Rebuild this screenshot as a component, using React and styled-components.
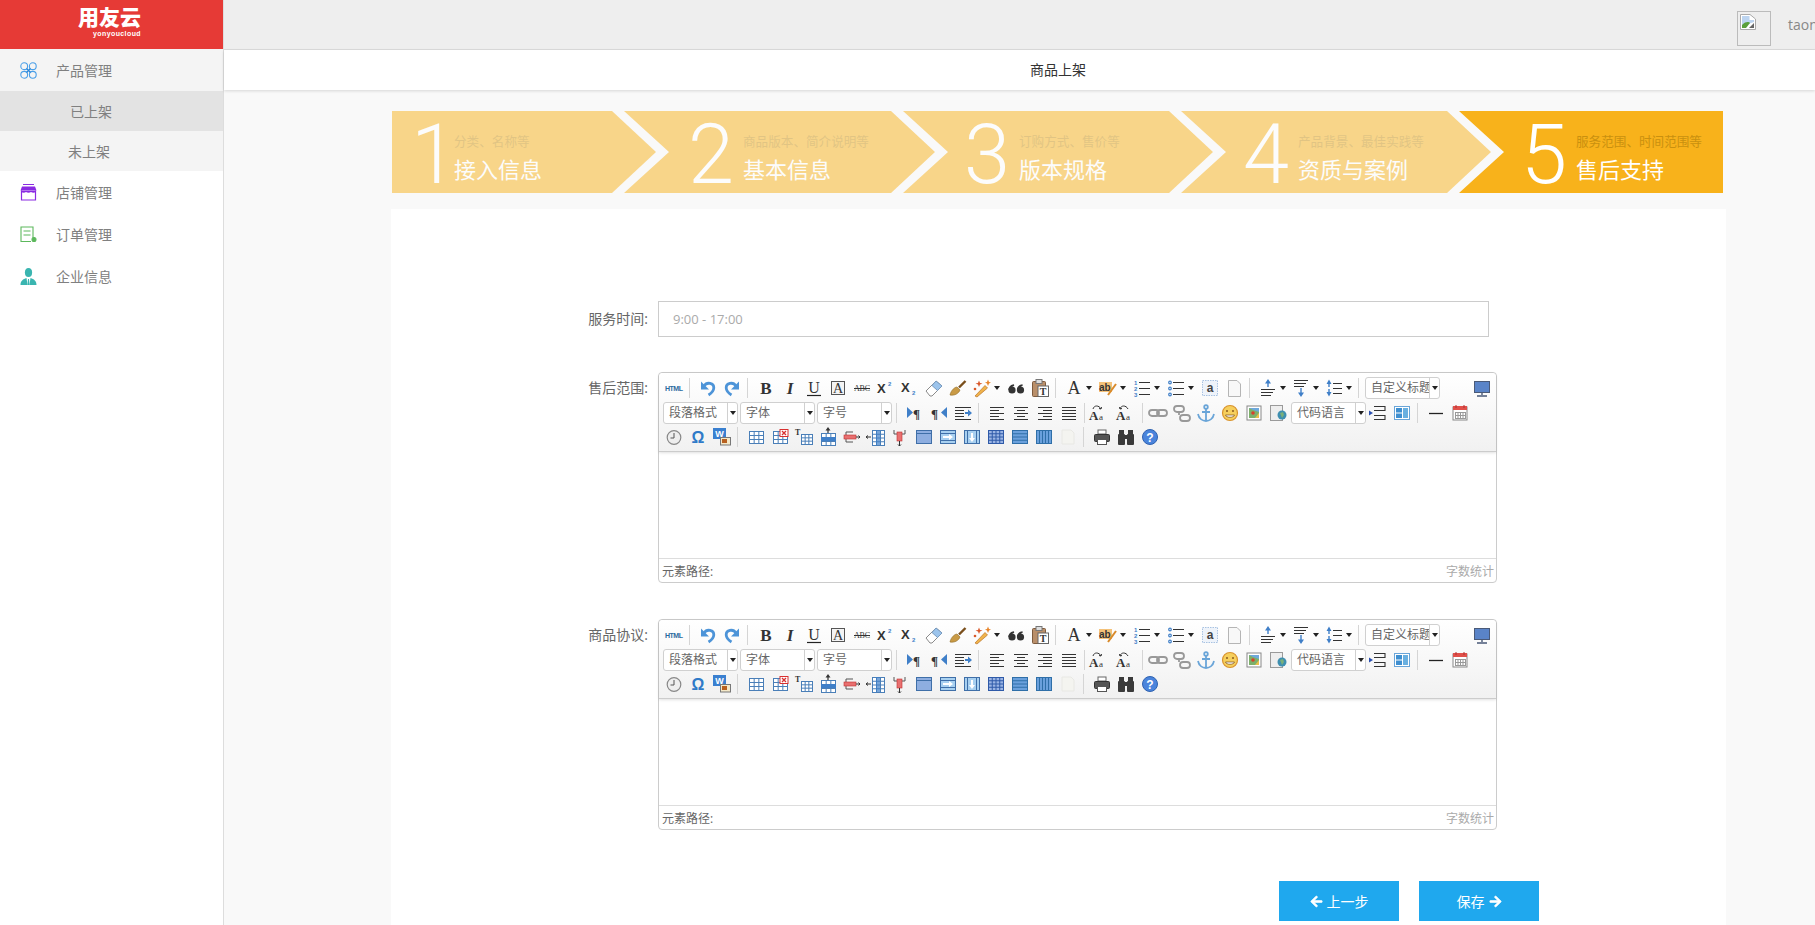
import React from "react";
import styled, { createGlobalStyle } from "styled-components";
import { FaArrowLeft, FaArrowRight } from "react-icons/fa";

const GlobalStyle = createGlobalStyle`
  html, body {
    margin: 0;
    height: 100%;
    overflow: hidden;
    background: #f9f9f9;
    font-family: "Open Sans", "Noto Sans CJK SC", sans-serif;
  }
`;

const Page = styled.div`
  display: grid;
  grid-template-columns: 224px 1fr;
  height: 925px;
  overflow: hidden;
`;

/* sidebar */
const Sidebar = styled.aside`
  background: #fff;
  border-right: 1px solid #ddd;
`;

const Logo = styled.div`
  height: 49px;
  background: #e63a36;
  color: #fff;
  display: flex;
  flex-direction: column;
  align-items: flex-end;
  padding-right: 82px;
  box-sizing: border-box;
`;

const LogoMark = styled.div`
  font: 800 21px/20px "Noto Sans CJK SC", sans-serif;
  margin-top: 6px;
`;

const LogoSub = styled.div`
  font: 700 7px/8px "Liberation Sans", sans-serif;
  letter-spacing: 0.4px;
  margin-top: 4px;
`;

const MenuItem = styled.div`
  display: flex;
  align-items: center;
  height: 42px;
  padding-left: 20px;
  gap: 19px;
  font-size: 14px;
  color: #808080;
  background: ${(p) => (p.$open ? "#f4f4f4" : "transparent")};
`;

const SubItem = styled.div`
  display: flex;
  align-items: center;
  height: 40px;
  padding-left: ${(p) => p.$indent}px;
  font-size: 14px;
  color: #808080;
  background: ${(p) => (p.$active ? "#e3e3e3" : "#f4f4f4")};
`;

/* top */
const Main = styled.main`
  min-width: 0;
  display: flex;
  flex-direction: column;
`;

const TopBar = styled.header`
  height: 49px;
  background: #eee;
  border-bottom: 1px solid #ddd;
  display: flex;
  align-items: center;
  padding-left: 1513px;
  gap: 17px;
  white-space: nowrap;
  font-size: 14px;
  color: #888;
  overflow: hidden;
`;

const Avatar = styled.div`
  flex: none;
  width: 34px;
  height: 35px;
  box-sizing: border-box;
  border: 1px solid #bbb;
  padding: 2px;
  margin-top: 8px;
`;

const TitleBar = styled.div`
  height: 40px;
  background: #fff;
  box-shadow: 0 1px 3px rgba(0, 0, 0, 0.14);
  padding-left: 167px;
`;

const Title = styled.div`
  width: 1334px;
  text-align: center;
  line-height: 40px;
  font-size: 14px;
  color: #333;
`;

const Content = styled.div`
  padding: 21px 0 0 167px;
`;

/* steps */
const Steps = styled.div`
  display: flex;
  height: 82px;
  padding-left: 1px;
`;

const Step = styled.div`
  flex: none;
  width: ${(p) => p.$w}px;
  margin-left: ${(p) => (p.$first ? 0 : -32)}px;
  padding-left: ${(p) => p.$pad}px;
  box-sizing: border-box;
  display: flex;
  align-items: center;
  background: #f8b21b;
  opacity: ${(p) => (p.$active ? 1 : 0.5)};
  clip-path: ${(p) =>
    p.$first
      ? "polygon(0 0, calc(100% - 44px) 0, 100% 50%, calc(100% - 44px) 100%, 0 100%)"
      : p.$active
        ? "polygon(0 0, 100% 0, 100% 100%, 0 100%, 45px 50%)"
        : "polygon(0 0, calc(100% - 44px) 0, 100% 50%, calc(100% - 44px) 100%, 0 100%, 45px 50%)"};
`;

const StepNum = styled.div`
  flex: none;
  width: 55px;
  height: 82px;
  box-sizing: border-box;
  padding: 3px 0 0 ${(p) => (p.$first ? 12 : 0)}px;
  font: 300 83px/82px Roboto, "Liberation Sans", sans-serif;
  color: #fff;
  text-align: ${(p) => (p.$first ? "center" : "left")};
`;

const StepText = styled.div`
  padding-top: 16px;
`;

const StepSub = styled.div`
  font-size: 12.6px;
  line-height: 18px;
  color: #c9900f;
  white-space: nowrap;
`;

const StepTitle = styled.div`
  font-size: 22px;
  line-height: 36px;
  color: #fff;
  white-space: nowrap;
`;

/* form */
const Panel = styled.section`
  width: 1335px;
  margin-top: 16px;
  background: #fff;
  padding: 92px 0 40px;
`;

const Row = styled.div`
  display: flex;
  align-items: flex-start;
  margin-bottom: ${(p) => p.$gap}px;
`;

const Label = styled.label`
  width: 267px;
  flex: none;
  box-sizing: border-box;
  padding-right: 10px;
  text-align: right;
  font-size: 14px;
  color: #666;
  line-height: ${(p) => p.$lh}px;
`;

const TextInput = styled.input`
  width: 831px;
  height: 36px;
  box-sizing: border-box;
  border: 1px solid #ccc;
  padding: 0 14px;
  font: 13px "Open Sans", sans-serif;
  outline: 0;
  &::placeholder {
    color: #aaa;
    opacity: 1;
  }
`;

/* editor */
const Editor = styled.div`
  width: 839px;
  height: 211px;
  box-sizing: border-box;
  border: 1px solid #ccc;
  border-radius: 4px;
  display: flex;
  flex-direction: column;
  background: #fff;
`;

const Toolbar = styled.div`
  height: 79px;
  flex: none;
  box-sizing: border-box;
  padding: 3px 2px 0 3px;
  background: linear-gradient(#fff, #f1f1f1);
  border-radius: 4px 4px 0 0;
  border-bottom: 1px solid #ccc;
  box-shadow: 0 1px 3px rgba(0, 0, 0, 0.12);
`;

const ToolRow = styled.div`
  display: flex;
  align-items: center;
  height: 24.5px;
`;

const ToolButton = styled.span`
  flex: none;
  width: 24px;
  height: 20px;
  display: flex;
  align-items: center;
  justify-content: center;
`;

const ToolIcon = styled.svg`
  overflow: visible;
`;

const ToolSep = styled.span`
  flex: none;
  width: 1px;
  height: 20px;
  margin: 0 ${(p) => p.$after}px 0 3px;
  background: #d5d5d5;
`;

const DropArrow = styled.span`
  flex: none;
  width: ${(p) => p.$w}px;
  &::before {
    content: "";
    display: block;
    width: 0;
    border: 3.5px solid transparent;
    border-top: 4px solid #222;
    border-bottom: 0;
  }
`;

const Select = styled.span`
  flex: none;
  width: 75px;
  height: 22px;
  margin: 0 ${(p) => p.$mr ?? 1}px 0 ${(p) => p.$ml ?? 1}px;
  box-sizing: border-box;
  border: 1px solid #d0d0d0;
  border-radius: 3px;
  background: #fff;
  display: flex;
  font-size: 12px;
  line-height: 20px;
  color: #666;
`;

const SelectText = styled.span`
  flex: 1;
  min-width: 0;
  overflow: hidden;
  white-space: nowrap;
  padding-left: 5px;
`;

const SelectArrow = styled.span`
  flex: none;
  width: 9px;
  border-left: 1px solid #d0d0d0;
  display: flex;
  align-items: center;
  justify-content: center;
  &::before {
    content: "";
    border: 3px solid transparent;
    border-top: 4px solid #222;
    border-bottom: 0;
  }
`;

const ToolSpacer = styled.span`
  flex: 1;
`;

const EditArea = styled.div`
  flex: 1;
`;

const StatusBar = styled.div`
  height: 24px;
  flex: none;
  box-sizing: border-box;
  border-top: 1px solid #ddd;
  display: flex;
  justify-content: space-between;
  align-items: center;
  padding: 0 2px 0 3px;
  font-size: 12px;
  color: #666;
`;

const WordCount = styled.span`
  color: #aaa;
`;

const Actions = styled.div`
  display: flex;
  gap: 20px;
  padding-left: 888px;
`;

const ActionButton = styled.button`
  width: 120px;
  height: 40px;
  border: 0;
  background: #1fa8ee;
  color: #fff;
  font: 14px "Noto Sans CJK SC", sans-serif;
  display: flex;
  align-items: center;
  justify-content: center;
  gap: 4px;
  padding: 0;
  svg {
    stroke: #fff;
    stroke-width: 24px;
  }
`;

/* drawn toolbar icons, 20x20 */
const BLUE = "#3f7fc8";
const DARK = "#333";
const serif = "Liberation Serif, serif";
const sans = "Liberation Sans, sans-serif";

const Lines = ({ rows, color = DARK }) =>
  rows.map(([x1, x2, y], i) => (
    <path key={i} d={`M${x1} ${y}H${x2}`} stroke={color} strokeWidth="1" />
  ));

const Grid = ({ x = 3, y = 4, w = 14, h = 12, cols = 3, rows = 3, color = "#4a7fb8", fill = "#fff" }) => {
  const vs = Array.from({ length: cols - 1 }, (_, i) => x + ((i + 1) * w) / cols);
  const hs = Array.from({ length: rows - 1 }, (_, i) => y + ((i + 1) * h) / rows);
  return (
    <g stroke={color} strokeWidth="1" fill="none">
      <rect x={x + 0.5} y={y + 0.5} width={w} height={h} fill={fill} />
      {vs.map((v) => (
        <path key={v} d={`M${v + 0.5} ${y}V${y + h}`} />
      ))}
      {hs.map((v) => (
        <path key={v} d={`M${x} ${v + 0.5}H${x + w}`} />
      ))}
    </g>
  );
};

const undoShape = (
  <g>
    <path d="M6 8C9 3.500 16 5 15.800 10C15.600 13.500 13 15.500 10.500 17" stroke="#4d94d8" strokeWidth="2.800" fill="none" />
    <path d="M3 3.500V11.500H11Z" fill="#4d94d8" />
  </g>
);

const alignRows = {
  alignLeft: [[3, 17, 4.5], [3, 12, 7.5], [3, 17, 10.5], [3, 12, 13.5], [3, 17, 16.5]],
  alignCenter: [[3, 17, 4.5], [6, 14, 7.5], [3, 17, 10.5], [6, 14, 13.5], [3, 17, 16.5]],
  alignRight: [[3, 17, 4.5], [8, 17, 7.5], [3, 17, 10.5], [8, 17, 13.5], [3, 17, 16.5]],
  justify: [[3, 17, 4.5], [3, 17, 7.5], [3, 17, 10.5], [3, 17, 13.5], [3, 17, 16.5]],
};

const chain = (
  <g fill="none" stroke="#999" strokeWidth="1.800">
    <rect x="1" y="7" width="10" height="6" rx="3" />
    <rect x="9" y="7" width="10" height="6" rx="3" />
  </g>
);

const icons = {
  html: (
    <text x="1" y="13" fontFamily={sans} fontWeight="700" fontSize="7" fill="#2a6a9e" textLength="18">HTML</text>
  ),
  undo: undoShape,
  redo: <g transform="translate(20 0) scale(-1 1)">{undoShape}</g>,
  bold: <text x="10" y="15.500" textAnchor="middle" fontFamily={serif} fontWeight="700" fontSize="17" fill={DARK}>B</text>,
  italic: <text x="10" y="15.500" textAnchor="middle" fontFamily={serif} fontStyle="italic" fontWeight="700" fontSize="17" fill={DARK}>I</text>,
  underline: (
    <g>
      <text x="10" y="14.500" textAnchor="middle" fontFamily={serif} fontSize="16" fill={DARK}>U</text>
      <path d="M3 17.500H17" stroke="#222" strokeWidth="1.200" />
    </g>
  ),
  fontborder: (
    <g>
      <rect x="3.500" y="3.500" width="13" height="13" fill="#f4f4f4" stroke="#555" />
      <text x="10" y="15" textAnchor="middle" fontFamily={serif} fontSize="14" fill={DARK}>A</text>
    </g>
  ),
  strike: (
    <g>
      <text x="10" y="13" textAnchor="middle" fontFamily={serif} fontSize="8" fill={DARK} textLength="16">ABC</text>
      <path d="M2 10.500H18" stroke="#333" />
    </g>
  ),
  sup: (
    <g>
      <text x="1" y="15" fontFamily={sans} fontWeight="700" fontSize="13" fill={DARK}>X</text>
      <text x="12" y="8" fontFamily={sans} fontWeight="700" fontSize="6" fill={BLUE}>2</text>
    </g>
  ),
  sub: (
    <g>
      <text x="1" y="14" fontFamily={sans} fontWeight="700" fontSize="13" fill={DARK}>X</text>
      <text x="12" y="17" fontFamily={sans} fontWeight="700" fontSize="6" fill={BLUE}>2</text>
    </g>
  ),
  eraser: (
    <g>
      <path d="M2 13L12 3L18 8L8 18H6Z" fill="#fff" stroke="#8a8a8a" />
      <path d="M8 7.500L12 3L18 8L13.500 12.500Z" fill="#9cc4ec" stroke="#7a9cc0" />
    </g>
  ),
  brush: (
    <g>
      <path d="M2 17C3 12 7 9 9 9L12 12C11 15 7 18 2 17Z" fill="#c99a45" stroke="#8f6a24" strokeWidth=".6" />
      <path d="M11 9.500L17.500 3" stroke="#7a4f1c" strokeWidth="2.400" />
    </g>
  ),
  wand: (
    <g>
      <path d="M3 18L13 7.500L15.500 10L5 19Z" fill="#f0b34a" stroke="#b9722a" strokeWidth=".7" />
      <path d="M7 2.500L8 5 10.500 5.500 8 6.500 7 9 6 6.500 3.500 5.500 6 5Z" fill="#d9582a" />
      <path d="M16 1.500L17 4 19 4.500 17 5.500 16 8 15 5.500 13 4.500 15 4Z" fill="#e8842a" />
      <circle cx="3" cy="11" r="1.300" fill="#d9582a" />
    </g>
  ),
  quote: (
    <g fill="#333">
      <circle cx="6" cy="12" r="3.600" />
      <path d="M2.400 12C2.400 8.500 5 6.500 8 6.200L8.200 7.800C6.500 8.300 5.500 9.500 5.300 12Z" />
      <circle cx="14.500" cy="12" r="3.600" />
      <path d="M10.900 12C10.900 8.500 13.500 6.500 16.500 6.200L16.700 7.800C15 8.300 14 9.500 13.800 12Z" />
    </g>
  ),
  paste: (
    <g>
      <rect x="2.500" y="3.500" width="13" height="15" rx="1" fill="#b98f6a" stroke="#7d5b3e" />
      <rect x="6" y="1.500" width="6" height="4" fill="#ddd" stroke="#777" />
      <rect x="8" y="8" width="10.500" height="10.500" fill="#fff" stroke="#666" />
      <text x="13.200" y="16.800" textAnchor="middle" fontFamily={serif} fontWeight="700" fontSize="10" fill={DARK}>T</text>
    </g>
  ),
  color: <text x="10" y="16" textAnchor="middle" fontFamily={serif} fontSize="18" fill={DARK}>A</text>,
  mark: (
    <g>
      <rect x="1" y="4" width="13" height="10" fill="#f4c27a" />
      <text x="1" y="13" fontFamily={sans} fontWeight="700" fontSize="10" fill={DARK}>ab</text>
      <path d="M10 17L18 6" stroke="#d98a2a" strokeWidth="2" />
    </g>
  ),
  ol: (
    <g>
      <text x="2" y="7" fontFamily={sans} fontSize="6" fontWeight="700" fill={BLUE}>1</text>
      <text x="2" y="13" fontFamily={sans} fontSize="6" fontWeight="700" fill={BLUE}>2</text>
      <text x="2" y="19" fontFamily={sans} fontSize="6" fontWeight="700" fill={BLUE}>3</text>
      <Lines rows={[[7, 18, 4.5], [7, 18, 10.5], [7, 18, 16.5]]} />
    </g>
  ),
  ul: (
    <g>
      <g fill="none" stroke={BLUE} strokeWidth="1.200">
        <circle cx="4" cy="4.500" r="1.300" />
        <circle cx="4" cy="10.500" r="1.300" />
        <circle cx="4" cy="16.500" r="1.300" />
      </g>
      <Lines rows={[[7, 18, 4.5], [7, 18, 10.5], [7, 18, 16.5]]} />
    </g>
  ),
  selectall: (
    <g>
      <rect x="2.500" y="2.500" width="15" height="15" fill="#eef3fa" stroke="#a8c2e2" strokeDasharray="1.500 1" />
      <text x="10" y="14" textAnchor="middle" fontFamily={sans} fontWeight="700" fontSize="12" fill="#444">a</text>
    </g>
  ),
  newdoc: <path d="M4.500 2.500H13L16.500 6V18.500H4.500Z" fill="#f8f8f8" stroke="#b5b5b5" />,
  above: (
    <g>
      <path d="M10 1L7 5.500H9.300V9H10.700V5.500H13Z" fill={BLUE} />
      <Lines rows={[[3, 17, 11.5], [3, 15, 14.5], [3, 13, 17.5]]} />
    </g>
  ),
  below: (
    <g>
      <Lines rows={[[3, 17, 2.5], [3, 15, 5.5], [3, 13, 8.5]]} />
      <path d="M10 19L7 14.500H9.300V10H10.700V14.500H13Z" fill={BLUE} />
    </g>
  ),
  lineheight: (
    <g>
      <path d="M5 1.500L2.500 6H4.300V9H5.700V6H7.500ZM5 18.500L2.500 14H4.300V11H5.700V14H7.500Z" fill={BLUE} />
      <Lines rows={[[9, 18, 5.5], [9, 18, 10.5], [9, 18, 15.5]]} />
    </g>
  ),
  fullscreen: (
    <g>
      <rect x="2.500" y="3.500" width="15" height="11" fill="#5a84c8" stroke="#4a5a78" />
      <path d="M10 15V17M5 18H15" stroke="#4a5a78" strokeWidth="1.400" />
    </g>
  ),
  ltr: (
    <g>
      <path d="M2 4V15L8 9.500Z" fill={BLUE} />
      <text x="8" y="15" fontFamily={serif} fontWeight="700" fontSize="13" fill={DARK}>¶</text>
    </g>
  ),
  rtl: (
    <g>
      <text x="2" y="15" fontFamily={serif} fontWeight="700" fontSize="13" fill={DARK}>¶</text>
      <path d="M18 4V15L12 9.500Z" fill={BLUE} />
    </g>
  ),
  indent: (
    <g>
      <Lines rows={[[2, 18, 4.5], [2, 11, 7.5], [2, 11, 10.5], [2, 11, 13.5], [2, 18, 16.5]]} />
      <path d="M12 9H15V6.500L19 10L15 13.500V11H12Z" fill={BLUE} />
    </g>
  ),
  alignLeft: <Lines rows={alignRows.alignLeft} />,
  alignCenter: <Lines rows={alignRows.alignCenter} />,
  alignRight: <Lines rows={alignRows.alignRight} />,
  justify: <Lines rows={alignRows.justify} />,
  spaceA: (
    <g transform="translate(-5 0)">
      <text x="1" y="17" fontFamily={serif} fontWeight="700" fontSize="13" fill={DARK}>A</text>
      <text x="11" y="17" fontFamily={serif} fontSize="9" fill={DARK}>a</text>
      <path d="M5 6C6 2 11 2 13 6M13 6L11 5.500M13 6L13.500 4" fill="none" stroke="#333" />
    </g>
  ),
  spaceB: (
    <g transform="translate(-2 0)">
      <text x="1" y="17" fontFamily={serif} fontWeight="700" fontSize="13" fill={DARK}>A</text>
      <text x="11" y="17" fontFamily={serif} fontSize="9" fill={DARK}>a</text>
      <path d="M13 6C11 2 6 2 5 6M5 6L7 5.500M5 6L4.500 4" fill="none" stroke="#333" />
    </g>
  ),
  link: chain,
  unlink: (
    <g fill="none" stroke="#999" strokeWidth="1.800">
      <rect x="2" y="3" width="10" height="6" rx="3" />
      <rect x="8" y="12" width="10" height="6" rx="3" />
      <path d="M7 9V12" />
    </g>
  ),
  anchor: (
    <g fill="none" stroke="#6aa5d8" strokeWidth="1.800">
      <circle cx="10" cy="4" r="1.800" />
      <path d="M10 6V18M6 9H14M2 11C3 16 7 18 10 18C13 18 17 16 18 11" />
    </g>
  ),
  emotion: (
    <g>
      <circle cx="10" cy="10" r="7.500" fill="#f6cf5c" stroke="#d9932e" strokeWidth="1.200" />
      <path d="M7 7V9M13 7V9" stroke="#7a4a16" strokeWidth="1.300" />
      <path d="M5.500 12H14.500C14 15 6 15 5.500 12Z" fill="#fff" stroke="#7a4a16" strokeWidth=".7" />
    </g>
  ),
  image: (
    <g>
      <rect x="3" y="3" width="14" height="14" fill="#fff" stroke="#888" />
      <rect x="5" y="5" width="10" height="10" fill="#7cb06a" />
      <path d="M5 5H15V9L9 7Z" fill="#6ea8dc" />
      <circle cx="9" cy="10" r="1.800" fill="#d8402a" />
      <path d="M11 15L15 10V15Z" fill="#e8c04a" />
    </g>
  ),
  map: (
    <g>
      <rect x="2.500" y="2.500" width="12" height="15" fill="#eee" stroke="#9a9a9a" />
      <circle cx="14" cy="12" r="4.500" fill="#3e8fb0" />
      <path d="M12 10L15 9L16 12L14 15Z" fill="#7ab07a" />
    </g>
  ),
  pagebreak: (
    <g>
      <path d="M6 3.500H17V7.500H6M6 16.500H17V12.500H6" fill="none" stroke="#333" strokeWidth="1.100" />
      <path d="M1 7.500L5 10L1 12.500Z" fill="#2a4fb0" />
    </g>
  ),
  template: (
    <g>
      <rect x="2.500" y="3.500" width="15" height="13" fill="#fff" stroke="#6aa5d8" />
      <rect x="4" y="5" width="6" height="4.500" fill="#3f8fd0" />
      <rect x="4" y="10.500" width="6" height="4.500" fill="#3f8fd0" />
      <rect x="11" y="5" width="5" height="10" fill="#6ab0e0" />
    </g>
  ),
  hr: <path d="M3 10.500H17" stroke="#222" strokeWidth="1.300" />,
  date: (
    <g>
      <rect x="3" y="4" width="14" height="13" fill="#fff" stroke="#888" />
      <rect x="3" y="3" width="14" height="4" fill="#e0504a" />
      <path d="M6 2V5M14 2V5" stroke="#b03030" />
      <Grid x={5} y={9} w={10} h={6} cols={4} rows={2} color="#999" />
    </g>
  ),
  time: (
    <g>
      <circle cx="10" cy="10.500" r="6.800" fill="#eee" stroke="#888" strokeWidth="1.200" />
      <path d="M10 6V11H6.500" stroke="#555" fill="none" />
    </g>
  ),
  omega: <text x="10" y="16" textAnchor="middle" fontFamily={sans} fontWeight="700" fontSize="16" fill="#2f7ac8">Ω</text>,
  word: (
    <g>
      <rect x="1" y="1" width="13" height="11" fill="#3a80d0" />
      <text x="7.500" y="10" textAnchor="middle" fontFamily={sans} fontWeight="700" fontSize="9" fill="#fff">W</text>
      <rect x="8.500" y="10.500" width="10" height="7.500" fill="#f4e8c8" stroke="#777" />
      <rect x="10" y="12" width="5" height="4" fill="#b8601f" />
    </g>
  ),
  table: <Grid />,
  tabledel: (
    <g>
      <Grid />
      <rect x="10" y="2.500" width="8" height="7" fill="#fff" stroke="#d83030" />
      <path d="M12 4L16 8M16 4L12 8" stroke="#d83030" strokeWidth="1.300" />
    </g>
  ),
  caption: (
    <g>
      <text x="1" y="8" fontFamily={serif} fontWeight="700" fontSize="8" fill={DARK}>T</text>
      <Grid x={7} y={7} w={11} h={10} />
    </g>
  ),
  insrow: (
    <g>
      <path d="M10 0L7.500 3.500H9.400V6H10.600V3.500H12.500Z" fill="#333" />
      <Grid y={6} h={12} rows={3} />
      <rect x="3" y="10" width="15" height="4" fill="#3f7fc8" />
    </g>
  ),
  delrow: (
    <g>
      <path d="M4 5H11M4 15H11M4 5V8M4 12V15" stroke="#555" fill="none" />
      <rect x="2" y="8" width="12" height="4" fill="#e87070" stroke="#c03030" strokeWidth=".6" />
      <path d="M14 10H18M16.500 8.500L18 10L16.500 11.500" stroke="#333" fill="none" />
    </g>
  ),
  inscol: (
    <g>
      <path d="M0 10H5M2 8.500L0 10L2 11.500" stroke="#333" fill="none" />
      <Grid x={6} y={3} w={12} h={15} cols={3} rows={4} />
      <rect x="10" y="3" width="4" height="15" fill="#3f7fc8" opacity=".7" />
    </g>
  ),
  delcol: (
    <g>
      <path d="M4 3V7H15V3" stroke="#555" fill="none" />
      <rect x="7" y="5" width="5" height="9" fill="#e87070" stroke="#c03030" strokeWidth=".6" />
      <path d="M9.500 14V19M8 17.500L9.500 19L11 17.500" stroke="#333" fill="none" />
    </g>
  ),
  merge: (
    <g>
      <rect x="2.500" y="3.500" width="15" height="13" fill="#8eaee0" stroke="#3f6fa8" />
      <path d="M2 6.500H18" stroke="#3f6fa8" />
    </g>
  ),
  mergeRight: (
    <g>
      <rect x="2.500" y="3.500" width="15" height="13" fill="#a8d0f0" stroke="#3f6fa8" />
      <path d="M2 6.500H18M2 13.500H18" stroke="#3f6fa8" />
      <path d="M5 9H11V7L15 10L11 13V11H5Z" fill="#fff" />
    </g>
  ),
  mergeDown: (
    <g>
      <rect x="2.500" y="3.500" width="15" height="13" fill="#a8d0f0" stroke="#3f6fa8" />
      <path d="M5.500 3V17M14.500 3V17" stroke="#3f6fa8" />
      <path d="M9 6V11H7L10 15L13 11H11V6Z" fill="#fff" />
    </g>
  ),
  split: <Grid x={2} y={3} w={15} h={13} cols={4} rows={4} color="#2f5aa8" fill="#9ab4e4" />,
  splitRows: <Grid x={2} y={3} w={15} h={13} cols={1} rows={4} color="#2f6fa8" fill="#6aa0dc" />,
  splitCols: <Grid x={2} y={3} w={15} h={13} cols={5} rows={1} color="#2f6fa8" fill="#6aa0dc" />,
  pale: <path d="M4 3H13L16 6V17H4Z" fill="#f4f4f0" stroke="#e8e8e4" />,
  print: (
    <g>
      <rect x="6" y="3" width="8" height="4" fill="#fff" stroke="#666" />
      <rect x="2.500" y="7.500" width="15" height="7" rx="1" fill="#555" stroke="#333" />
      <rect x="5.500" y="12.500" width="9" height="5" fill="#fff" stroke="#555" />
    </g>
  ),
  bino: (
    <g fill="#3a3a3a">
      <rect x="3" y="3" width="5" height="5" />
      <rect x="12" y="3" width="5" height="5" />
      <rect x="2" y="7" width="7" height="11" rx="1" />
      <rect x="11" y="7" width="7" height="11" rx="1" />
      <rect x="8" y="8" width="4" height="4" />
    </g>
  ),
  help: (
    <g>
      <circle cx="10" cy="10" r="7.500" fill="#4a84dc" stroke="#2f62b0" />
      <text x="10" y="14.500" textAnchor="middle" fontFamily={sans} fontWeight="700" fontSize="12" fill="#fff">?</text>
    </g>
  ),
};

const row1 = [
  "html", "-", "undo", "redo", "-", "bold", "italic", "underline", "fontborder", "strike", "sup", "sub",
  "eraser", "brush", "wand+", "quote", "paste", "-", "color+", "mark+", "ol+", "ul+", "selectall", "newdoc",
  "-", "above~", "below~", "lineheight~", "-", { label: "自定义标题", ml: 0 }, ">", "fullscreen",
];
const row2 = [
  { label: "段落格式" }, { label: "字体" }, { label: "字号" }, "-", "ltr", "rtl", "indent", "-",
  "alignLeft", "alignCenter", "alignRight", "justify", "-", "spaceA", "spaceB", "=",
  "link", "unlink", "anchor", "emotion", "image", "map", { label: "代码语言", mr: 0 }, "pagebreak", "template", "-", "hr", "date",
];
const row3 = [
  "time", "omega", "word", "-", "table", "tabledel", "caption", "insrow", "delrow", "inscol", "delcol",
  "merge", "mergeRight", "mergeDown", "split", "splitRows", "splitCols", "pale", "-", "print", "bino", "help",
];

const Tool = ({ item }) => {
  if (item === "-") return <ToolSep $after={6} />;
  if (item === "=") return <ToolSep $after={3} />;
  if (item === ">") return <ToolSpacer />;
  if (typeof item === "object") {
    return (
      <Select $ml={item.ml} $mr={item.mr}>
        <SelectText>{item.label}</SelectText>
        <SelectArrow />
      </Select>
    );
  }
  const name = item.replace(/[+~]$/, "");
  return (
    <>
      <ToolButton>
        <ToolIcon width="20" height="20" viewBox="0 0 20 20">{icons[name]}</ToolIcon>
      </ToolButton>
      {item.endsWith("+") && <DropArrow $w={10} />}
      {item.endsWith("~") && <DropArrow $w={9} />}
    </>
  );
};

const RichEditor = () => (
  <Editor>
    <Toolbar>
      {[row1, row2, row3].map((row, i) => (
        <ToolRow key={i}>
          {row.map((item, j) => (
            <Tool key={j} item={item} />
          ))}
        </ToolRow>
      ))}
    </Toolbar>
    <EditArea />
    <StatusBar>
      <span>元素路径:</span>
      <WordCount>字数统计</WordCount>
    </StatusBar>
  </Editor>
);

/* sidebar icons */
const ProductIcon = () => (
  <svg width="17" height="17" viewBox="0 0 17 17" fill="none" stroke="#4a9fe8" strokeWidth="1.100">
    <circle cx="4.200" cy="4.200" r="3.400" />
    <circle cx="12.800" cy="4.200" r="3.400" />
    <circle cx="4.200" cy="12.800" r="3.400" />
    <circle cx="12.800" cy="12.800" r="3.400" />
    <path d="M6.500 6.500L10.500 10.500M10.500 6.500L6.500 10.500" stroke="#2a86d8" strokeWidth="1.300" />
  </svg>
);

const ShopIcon = () => (
  <svg width="17" height="17" viewBox="0 0 17 17">
    <path d="M3 0.500H14" stroke="#8a2be2" />
    <path d="M2 2.500H15L16.500 6.500H0.500Z" fill="#8a2be2" />
    <path d="M1.500 6.500V16H15.500V6.500" fill="#fff" stroke="#8a2be2" strokeWidth="1.200" />
    <path d="M1 6.500H16V8C14 9 12.500 9 11 8C9.500 9 7.500 9 6 8C4.500 9 3 9 1 8Z" fill="#8a2be2" />
  </svg>
);

const OrderIcon = () => (
  <svg width="17" height="17" viewBox="0 0 17 17" fill="none" stroke="#5cb85c" strokeWidth="1.100">
    <path d="M13 12V1H1V15.500H11" />
    <path d="M3.500 5H10.500M3.500 9H10.500" />
    <circle cx="14" cy="13.500" r="2" fill="#5cb85c" />
  </svg>
);

const CompanyIcon = () => (
  <svg width="17" height="17" viewBox="0 0 17 17" fill="#3ab5b0">
    <ellipse cx="8.500" cy="4.500" rx="3.600" ry="4.500" />
    <path d="M0.500 17C0.500 13 3 11 6.500 10L7.600 17ZM16.500 17C16.500 13 14 11 10.500 10L9.400 17Z" />
    <path d="M8 11H9L9.500 17H7.500Z" />
  </svg>
);

const BrokenImage = () => (
  <svg width="16" height="16" viewBox="0 0 16 16">
    <path d="M0.500 0.500H10L15.500 5V15.500H0.500Z" fill="#fff" stroke="#aaa" />
    <path d="M2 2H9.500V6H14V8L2 12Z" fill="#bcd4f0" />
    <path d="M2 14V11C6 7 9 8 10 9L6 14Z" fill="#5aa03c" />
    <path d="M9 14L14 9V14Z" fill="#666" />
  </svg>
);

const steps = [
  { n: 1, sub: "分类、名称等", title: "接入信息", w: 264, pad: 7 },
  { n: 2, sub: "商品版本、简介说明等", title: "基本信息", w: 311, pad: 64 },
  { n: 3, sub: "订购方式、售价等", title: "版本规格", w: 310, pad: 61 },
  { n: 4, sub: "产品背景、最佳实践等", title: "资质与案例", w: 310, pad: 62 },
  { n: 5, sub: "服务范围、时间范围等", title: "售后支持", w: 264, pad: 62 },
];

const App = () => (
  <Page>
    <GlobalStyle />
    <Sidebar>
      <Logo>
        <LogoMark>用友云</LogoMark>
        <LogoSub>yonyoucloud</LogoSub>
      </Logo>
      <MenuItem $open>
        <ProductIcon />
        产品管理
      </MenuItem>
      <SubItem $active $indent={70}>已上架</SubItem>
      <SubItem $indent={68}>未上架</SubItem>
      <MenuItem>
        <ShopIcon />
        店铺管理
      </MenuItem>
      <MenuItem>
        <OrderIcon />
        订单管理
      </MenuItem>
      <MenuItem>
        <CompanyIcon />
        企业信息
      </MenuItem>
    </Sidebar>
    <Main>
      <TopBar>
        <Avatar>
          <BrokenImage />
        </Avatar>
        <span>taon</span>
      </TopBar>
      <TitleBar>
        <Title>商品上架</Title>
      </TitleBar>
      <Content>
        <Steps>
          {steps.map((s, i) => (
            <Step key={s.n} $w={s.w} $pad={s.pad} $first={i === 0} $active={i === 4}>
              <StepNum $first={i === 0}>{s.n}</StepNum>
              <StepText>
                <StepSub>{s.sub}</StepSub>
                <StepTitle>{s.title}</StepTitle>
              </StepText>
            </Step>
          ))}
        </Steps>
        <Panel>
          <Row $gap={35}>
            <Label $lh={36}>服务时间:</Label>
            <TextInput placeholder="9:00 - 17:00" />
          </Row>
          <Row $gap={36}>
            <Label $lh={32}>售后范围:</Label>
            <RichEditor />
          </Row>
          <Row $gap={51}>
            <Label $lh={32}>商品协议:</Label>
            <RichEditor />
          </Row>
          <Actions>
            <ActionButton>
              <FaArrowLeft size={13} />
              上一步
            </ActionButton>
            <ActionButton>
              保存
              <FaArrowRight size={13} />
            </ActionButton>
          </Actions>
        </Panel>
      </Content>
    </Main>
  </Page>
);

export default App;
